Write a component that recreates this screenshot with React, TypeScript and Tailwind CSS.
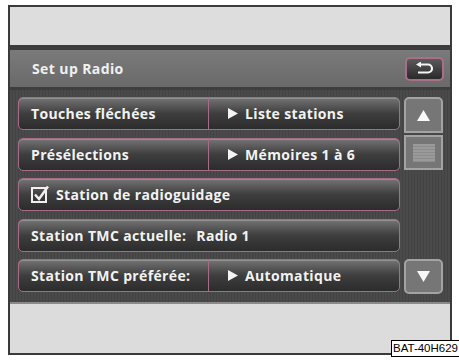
import React from 'react';

const font = { fontFamily: '"Open Sans", "Liberation Sans", sans-serif' };

function Row({ children, className = '' }: { children: React.ReactNode; className?: string }) {
  return (
    <div
      className={`flex h-[33px] items-stretch rounded-[5px] border-[1.5px] border-[#a56d86] bg-gradient-to-b from-[#747474] via-[#3e3e3e] to-[#2c2c2c] shadow-[inset_0_1px_0_#909090] ${className}`}
    >
      {children}
    </div>
  );
}

function Cell({ children, className = '' }: { children: React.ReactNode; className?: string }) {
  return (
    <div className={`flex items-center text-[14px] font-bold tracking-[0.35px] text-[#f2f2f2] ${className}`}>
      {children}
    </div>
  );
}

function Arrow() {
  return (
    <svg width="10" height="11" viewBox="0 0 10 11" className="mr-[7px]">
      <path d="M0 0 L10 5.5 L0 11 Z" fill="#f4f4f4" />
    </svg>
  );
}

export default function App() {
  return (
    <div className="relative h-[362px] w-[459px] bg-white" style={font}>
      <div className="ml-[8px] pt-[5px]">
        <div className="flex h-[350px] w-[444px] flex-col border-2 border-[#3a3a3a] bg-[#dcdcdc]">
          {/* top empty area */}
          <div className="h-[38px] shrink-0 bg-[#dddddd]" />

          {/* screen */}
          <div className="flex h-[257px] shrink-0 flex-col border-t-[5px] border-[#3c3c3c] bg-[#474747]">
            {/* header */}
            <div className="flex h-[40px] shrink-0 items-center justify-between border-b-[3px] border-[#3e3e3e] bg-gradient-to-b from-[#7a7a7a] to-[#6a6a6a] pl-[22px] pr-[6px]">
              <span className="text-[14px] font-bold tracking-[0.4px] text-[#f0f0f0]">Set up Radio</span>
              <div className="flex h-[24px] w-[39px] items-center justify-center rounded-[5px] border-2 border-[#a96f89] bg-gradient-to-b from-[#5a5a5a] to-[#2a2a2a]">
                <svg width="20" height="13" viewBox="0 0 20 13">
                  <path d="M5 2.5 H13 A4 4 0 0 1 13 10.5 H3" fill="none" stroke="#f4f4f4" strokeWidth="2.2" />
                  <path d="M1 2.5 L6 -0.5 L6 5.5 Z" fill="#f4f4f4" />
                </svg>
              </div>
            </div>

            {/* list */}
            <div className="flex flex-1 gap-[4px] bg-[repeating-linear-gradient(90deg,#4a4a4a_0px,#4a4a4a_2px,#434343_2px,#434343_3px)] pl-[8px] pr-[7px] pt-[7px]">
              <div className="flex w-[382px] flex-col gap-[7.5px]">
                <Row>
                  <Cell className="w-[190px] border-r-[1.5px] border-[#a56d86] pl-[12px]">Touches fléchées</Cell>
                  <Cell className="pl-[19px]">
                    <Arrow />
                    Liste stations
                  </Cell>
                </Row>
                <Row>
                  <Cell className="w-[190px] border-r-[1.5px] border-[#a56d86] pl-[12px]">Présélections</Cell>
                  <Cell className="pl-[19px]">
                    <Arrow />
                    Mémoires 1 à 6
                  </Cell>
                </Row>
                <Row>
                  <Cell className="pl-[12px]">
                    <svg width="19" height="19" viewBox="0 0 19 19" className="mr-[6px]">
                      <rect x="1" y="3" width="14" height="14" fill="none" stroke="#f0f0f0" strokeWidth="2" />
                      <path d="M4 9.5 L8 14 L17 1.5" fill="none" stroke="#f0f0f0" strokeWidth="2.4" />
                    </svg>
                    Station de radioguidage
                  </Cell>
                </Row>
                <Row>
                  <Cell className="pl-[12px]">
                    Station TMC actuelle:<span className="ml-[10px]">Radio 1</span>
                  </Cell>
                </Row>
                <Row>
                  <Cell className="w-[190px] border-r-[1.5px] border-[#a56d86] pl-[12px]">Station TMC préférée:</Cell>
                  <Cell className="pl-[19px]">
                    <Arrow />
                    Automatique
                  </Cell>
                </Row>
              </div>

              {/* scroll column */}
              <div className="flex w-[39px] flex-col">
                <div className="flex h-[36px] items-center justify-center rounded-t-[5px] border-2 border-[#a3a3a3] bg-[#767676]">
                  <svg width="13" height="11" viewBox="0 0 13 11">
                    <path d="M6.5 0 L13 11 L0 11 Z" fill="#f8f8f8" />
                  </svg>
                </div>
                <div className="mt-[2px] flex h-[35px] items-center justify-center border-2 border-[#a3a3a3] bg-[#767676]">
                  <div className="h-[18px] w-[22px] bg-[repeating-linear-gradient(180deg,#9a9a9a_0px,#9a9a9a_2px,#8c8c8c_2px,#8c8c8c_3px)]" />
                </div>
                <div className="flex-1" />
                <div className="mb-[8px] flex h-[35px] items-center justify-center rounded-[5px] border-2 border-[#a3a3a3] bg-[#767676]">
                  <svg width="13" height="11" viewBox="0 0 13 11">
                    <path d="M0 0 L13 0 L6.5 11 Z" fill="#f8f8f8" />
                  </svg>
                </div>
              </div>
            </div>
          </div>

          {/* bottom empty area */}
          <div className="flex-1 border-t-[2px] border-[#8a8a8a] bg-[#dcdcdc]" />
        </div>
      </div>

      <div
        className="absolute left-[391px] top-[340px] whitespace-nowrap border border-black bg-white px-[1px] text-[11.5px] leading-[15px] text-black"
        style={{ fontFamily: '"Liberation Sans", Arial, sans-serif' }}
      >
        BAT-40H629
      </div>
    </div>
  );
}
